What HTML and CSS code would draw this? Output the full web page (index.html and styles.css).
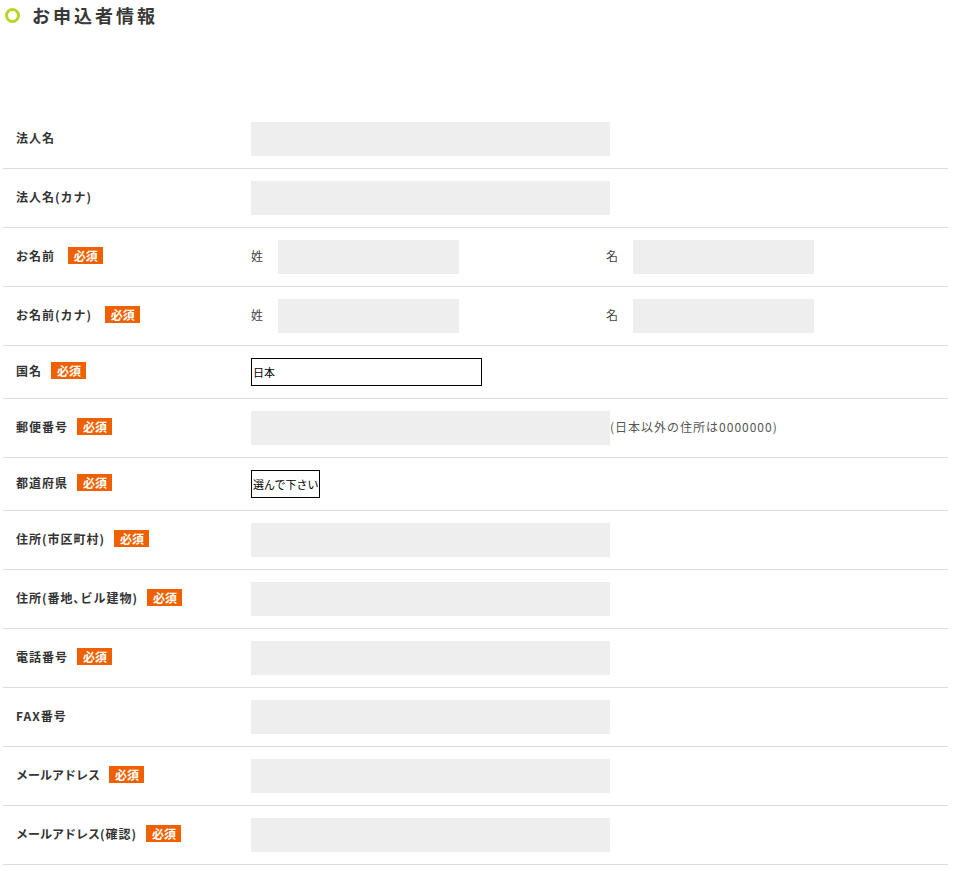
FILE: index.html
```html
<!DOCTYPE html>
<html lang="ja">
<head>
<meta charset="utf-8">
<title>お申込者情報</title>
<link rel="stylesheet" href="styles.css">
</head>
<body>
<div class="page">
  <h2 class="heading"><span class="ring"></span>お申込者情報</h2>
  <table class="form">
    <tr>
      <th>法人名</th>
      <td><input class="field" type="text"></td>
    </tr>
    <tr>
      <th>法人名(カナ)</th>
      <td><input class="field" type="text"></td>
    </tr>
    <tr>
      <th>お名前 <span class="req">必須</span></th>
      <td>
        <div class="pair">
          <div class="half"><span class="sub">姓</span><input class="field short" type="text"></div>
          <div class="half"><span class="sub">名</span><input class="field short" type="text"></div>
        </div>
      </td>
    </tr>
    <tr>
      <th>お名前(カナ) <span class="req">必須</span></th>
      <td>
        <div class="pair">
          <div class="half"><span class="sub">姓</span><input class="field short" type="text"></div>
          <div class="half"><span class="sub">名</span><input class="field short" type="text"></div>
        </div>
      </td>
    </tr>
    <tr>
      <th>国名<span class="req">必須</span></th>
      <td><select class="choice wide"><option>日本</option></select></td>
    </tr>
    <tr>
      <th>郵便番号<span class="req">必須</span></th>
      <td><div class="inline"><input class="field" type="text"><span class="note">(日本以外の住所は0000000)</span></div></td>
    </tr>
    <tr>
      <th>都道府県<span class="req">必須</span></th>
      <td><select class="choice narrow"><option>選んで下さい</option></select></td>
    </tr>
    <tr>
      <th>住所(市区町村)<span class="req">必須</span></th>
      <td><input class="field" type="text"></td>
    </tr>
    <tr>
      <th>住所(番地､ビル建物)<span class="req">必須</span></th>
      <td><input class="field" type="text"></td>
    </tr>
    <tr>
      <th>電話番号<span class="req">必須</span></th>
      <td><input class="field" type="text"></td>
    </tr>
    <tr>
      <th>FAX番号</th>
      <td><input class="field" type="text"></td>
    </tr>
    <tr>
      <th><span class="tight">メールアドレス</span><span class="req">必須</span></th>
      <td><input class="field" type="text"></td>
    </tr>
    <tr>
      <th><span class="tight">メールアドレス</span>(確認)<span class="req">必須</span></th>
      <td><input class="field" type="text"></td>
    </tr>
  </table>
</div>
</body>
</html>
```

FILE: styles.css
```css
html, body {
  margin: 0;
  padding: 0;
  background: #fff;
}

body {
  font-family: "Noto Sans CJK JP", "Noto Sans", sans-serif;
  color: #333;
}

.page {
  padding: 0 8px 0 3px;
}

.heading {
  display: flex;
  align-items: center;
  margin: 0;
  height: 30px;
  padding-left: 2px;
  font-size: 18px;
  font-weight: 700;
  letter-spacing: 3px;
  color: #383838;
  line-height: 30px;
}

.ring {
  width: 9px;
  height: 9px;
  border: 3.5px solid #b9d52a;
  border-radius: 50%;
  margin-right: 12px;
  flex: none;
}

.form {
  margin-top: 80px;
  width: 945px;
  border-collapse: collapse;
  table-layout: fixed;
}

.form tr {
  border-bottom: 1px solid #dcdcdc;
}

.form th {
  width: 235px;
  padding: 9px 0 13px 13px;
  text-align: left;
  vertical-align: middle;
  font-size: 12px;
  line-height: 17px;
  font-weight: 700;
  letter-spacing: 1px;
  color: #333;
  white-space: nowrap;
}

.tight {
  letter-spacing: 0;
}

.form td {
  padding: 12px 0;
  vertical-align: middle;
}

.req {
  display: inline-block;
  margin-left: 9px;
  padding: 0 5px 0 6px;
  height: 17px;
  line-height: 17px;
  background: #ef6100;
  color: #fff;
  font-size: 12px;
  font-weight: 700;
  letter-spacing: 0;
  vertical-align: top;
}

.field {
  display: block;
  box-sizing: border-box;
  width: 359px;
  height: 34px;
  margin: 0;
  border: 0;
  padding: 0 8px;
  background: #eeeeee;
  font-family: inherit;
  font-size: 12px;
  outline: none;
  flex: none;
}

.field.short {
  width: 181px;
}

.pair {
  display: flex;
}

.half {
  display: flex;
  align-items: center;
  width: 355px;
  flex: none;
}

.sub {
  width: 27px;
  padding-bottom: 4px;
  font-size: 12px;
  color: #444;
  flex: none;
}

.inline {
  display: flex;
  align-items: center;
}

.note {
  padding-bottom: 4px;
  font-size: 12px;
  color: #555;
  letter-spacing: 1px;
  white-space: nowrap;
}

.choice {
  display: block;
  box-sizing: border-box;
  height: 28px;
  margin: 0;
  padding: 0 1px 1px;
  border: 1px solid #000;
  border-radius: 0;
  background: #fff;
  color: #000;
  font-family: inherit;
  font-size: 11px;
  -webkit-appearance: none;
  appearance: none;
}

.choice.wide {
  width: 231px;
}

.choice.narrow {
  width: 69px;
}
```
